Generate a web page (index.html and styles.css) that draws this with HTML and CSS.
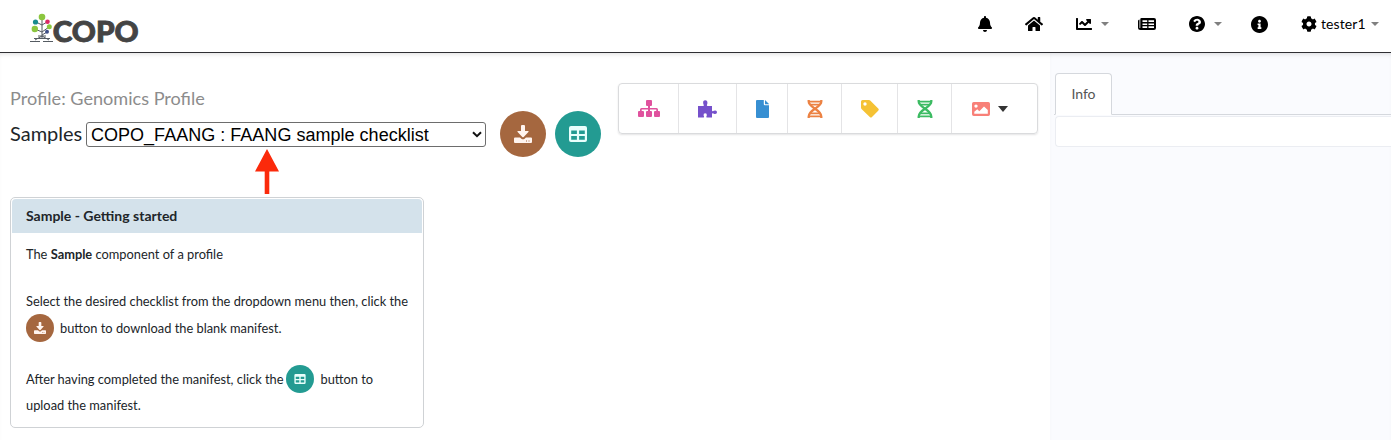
FILE: index.html
```html
<!DOCTYPE html>
<html lang="en">
<head>
<meta charset="utf-8">
<title>COPO - Samples</title>
<link rel="stylesheet" href="styles.css">
</head>
<body>
<svg class="defs" width="0" height="0">
  <symbol id="download" viewBox="0 0 18 18"><path d="M7 1q0-1 1-1h2q1 0 1 1v5h3q1.200 0 .4.900L9.700 12q-.7.700-1.400 0L3.600 6.900Q2.800 6 4 6h3zM1 12.500h5l1.700 1.400q1.300.900 2.600 0l1.700-1.400h5q1 0 1 1V17q0 1-1 1H1q-1 0-1-1v-3.500q0-1 1-1zm11 3v1h1v-1zm2.500 0v1h1v-1z"/></symbol>
  <symbol id="table" viewBox="0 0 18 16"><path fill-rule="evenodd" d="M2 0h14q2 0 2 2v12q0 2-2 2H2q-2 0-2-2V2q0-2 2-2zm.2 4.500V8h5.700V4.500zm7.900 0V8h5.700V4.500zM2.200 10v3.700h5.700V10zm7.900 0v3.700h5.700V10z"/></symbol>
  <symbol id="dna" viewBox="0 0 16 18"><g fill="none" stroke="currentColor" stroke-width="2.300"><path d="M1.700 0v1.500C1.700 8 14.300 9 14.300 16.500V18M14.300 0v1.500C14.300 8 1.700 9 1.700 16.500V18"/><path stroke-width="1.800" d="M1 1.700h14M3 4.700h10M3 13.300h10M1 16.300h14"/></g></symbol>
</svg>
<header class="topbar">
  <svg class="logo" width="112" height="39" viewBox="0 0 112 39">
    <g fill="none" stroke="#555b62" stroke-width="1"><path d="M12 6v20M6 10l6 3 5-3M5 17l7 3 7-5M12 23l5-3M8 24h8M4 26.500h16M0 29.500h10M13 29.500h10M12 24l-7 4M12 24l7 4"/></g>
    <circle cx="12" cy="5" r="3.300" fill="#8cc63f"/><circle cx="5.500" cy="10" r="2.600" fill="#178a8d"/><circle cx="17.500" cy="9.700" r="2.300" fill="#dc2866"/><circle cx="4.800" cy="17" r="3.200" fill="#8cc63f"/><circle cx="19.300" cy="14.700" r="2.500" fill="#8cc63f"/><circle cx="17" cy="19.800" r="2" fill="#3f4f87"/>
    <text class="wordmark" x="22.700" y="30.300" textLength="86" lengthAdjust="spacingAndGlyphs">COPO</text>
  </svg>
  <nav class="nav">
    <svg class="bell" width="14" height="16" viewBox="0 0 448 512"><path d="M224 512c35.320 0 63.970-28.650 63.970-64H160.030c0 35.350 28.650 64 63.970 64zm215.390-149.710c-19.320-20.760-55.470-51.990-55.470-154.290 0-77.700-54.480-139.900-127.940-155.160V32c0-17.670-14.320-32-31.980-32s-31.980 14.330-31.980 32v20.840C118.560 68.100 64.080 130.300 64.080 208c0 102.300-36.150 133.530-55.470 154.290-6 6.450-8.660 14.160-8.610 21.710.11 16.400 12.980 32 32.100 32h383.800c19.120 0 32-15.600 32.100-32 .05-7.550-2.610-15.270-8.610-21.710z"/></svg>
    <svg class="home" width="18" height="16" viewBox="0 0 576 512"><path d="M280.370 148.260L96 300.110V464a16 16 0 0 0 16 16l112.060-.29a16 16 0 0 0 15.920-16V368a16 16 0 0 1 16-16h64a16 16 0 0 1 16 16v95.640a16 16 0 0 0 16 16.050L464 480a16 16 0 0 0 16-16V300L295.670 148.260a12.190 12.190 0 0 0-15.300 0zM571.600 251.470L488 182.560V44.050a12 12 0 0 0-12-12h-56a12 12 0 0 0-12 12v72.610L318.470 43a48 48 0 0 0-61 0L4.340 251.470a12 12 0 0 0-1.600 16.900l25.500 31A12 12 0 0 0 45.150 301l235.220-193.740a12.190 12.190 0 0 1 15.300 0L530.900 301a12 12 0 0 0 16.900-1.600l25.500-31a12 12 0 0 0-1.700-16.930z"/></svg>
    <svg class="chart" width="16" height="16" viewBox="0 0 512 512"><path d="M496 384H64V80c0-8.840-7.160-16-16-16H16C7.160 64 0 71.160 0 80v336c0 17.670 14.330 32 32 32h464c8.840 0 16-7.160 16-16v-32c0-8.840-7.160-16-16-16zM464 96H345.940c-21.380 0-32.090 25.850-16.970 40.970l32.400 32.400L288 242.750l-73.370-73.370c-12.500-12.500-32.760-12.500-45.250 0l-68.690 68.690c-6.250 6.250-6.250 16.380 0 22.630l22.620 22.620c6.250 6.250 16.380 6.250 22.630 0L192 237.250l73.370 73.370c12.500 12.500 32.760 12.500 45.250 0l96-96 32.400 32.400c15.120 15.120 40.970 4.410 40.970-16.970V112c.01-8.840-7.150-16-15.990-16z"/></svg>
    <i class="caret"></i>
    <svg class="news" width="18" height="14" viewBox="0 0 18 14"><path fill-rule="evenodd" d="M3.500 1H16q2 0 2 2v8q0 2-2 2H2.500Q0 13 0 10.500V4q0-1.500 1.500-1.500V11h.8V2.200Q2.300 1 3.500 1zM4.500 3.200v1.800h4.700V3.200zm6 0v1.800H16V3.200zm-6 3.200v1.500h4.700V6.400zm6 0v1.500H16V6.400zm-6 2.900V11h4.700V9.300zm6 0V11H16V9.300z"/></svg>
    <svg class="help" width="16" height="16" viewBox="8 8 496 496"><path d="M504 256c0 136.997-111.043 248-248 248S8 392.997 8 256C8 119.083 119.043 8 256 8s248 111.083 248 248zM262.655 90c-54.497 0-89.255 22.957-116.549 63.758-3.536 5.286-2.353 12.415 2.715 16.258l34.699 26.310c5.205 3.947 12.621 3.008 16.665-2.122 17.864-22.658 30.113-35.797 57.303-35.797 20.429 0 45.698 13.148 45.698 32.958 0 14.976-12.363 22.667-32.534 33.976C247.128 238.528 216 254.941 216 296v4c0 6.627 5.373 12 12 12h56c6.627 0 12-5.373 12-12v-1.333c0-28.462 83.186-29.647 83.186-106.667 0-58.002-60.165-102-116.531-102zM256 338c-25.365 0-46 20.635-46 46 0 25.364 20.635 46 46 46s46-20.636 46-46c0-25.365-20.635-46-46-46z"/></svg>
    <i class="caret"></i>
    <svg class="info" width="17" height="17" viewBox="8 8 496 496"><path d="M256 8C119.043 8 8 119.083 8 256c0 136.997 111.043 248 248 248s248-111.003 248-248C504 119.083 392.957 8 256 8zm0 110c23.196 0 42 18.804 42 42s-18.804 42-42 42-42-18.804-42-42 18.804-42 42-42zm56 254c0 6.627-5.373 12-12 12h-88c-6.627 0-12-5.373-12-12v-24c0-6.627 5.373-12 12-12h12v-64h-12c-6.627 0-12-5.373-12-12v-24c0-6.627 5.373-12 12-12h64c6.627 0 12 5.373 12 12v100h12c6.627 0 12 5.373 12 12v24z"/></svg>
    <svg class="cog" width="16" height="16" viewBox="0 0 512 512"><path d="M487.400 315.700l-42.600-24.600c4.300-23.200 4.300-47 0-70.200l42.600-24.600c4.900-2.800 7.100-8.600 5.500-14-11.100-35.600-30-67.800-54.700-94.600-3.800-4.100-10-5.100-14.800-2.300L380.800 110c-17.900-15.400-38.500-27.300-60.800-35.100V25.800c0-5.600-3.900-10.500-9.400-11.700-36.700-8.200-74.300-7.800-109.200 0-5.500 1.200-9.400 6.100-9.400 11.700V75c-22.200 7.900-42.800 19.800-60.800 35.100L88.700 85.500c-4.900-2.800-11-1.900-14.800 2.300-24.700 26.700-43.600 58.900-54.700 94.600-1.700 5.400.6 11.200 5.500 14L67.300 221c-4.300 23.200-4.300 47 0 70.200l-42.600 24.600c-4.900 2.800-7.100 8.600-5.500 14 11.100 35.600 30 67.800 54.700 94.600 3.800 4.100 10 5.100 14.800 2.300l42.600-24.600c17.900 15.400 38.500 27.300 60.800 35.100v49.200c0 5.600 3.900 10.500 9.400 11.700 36.700 8.200 74.300 7.800 109.200 0 5.500-1.200 9.400-6.100 9.400-11.700v-49.200c22.200-7.900 42.800-19.800 60.800-35.100l42.600 24.600c4.900 2.800 11 1.900 14.800-2.300 24.700-26.700 43.600-58.900 54.700-94.600 1.500-5.500-.7-11.300-5.600-14.100zM256 336c-44.100 0-80-35.900-80-80s35.900-80 80-80 80 35.900 80 80-35.900 80-80 80z"/></svg>
    <span class="user">tester1</span>
    <i class="caret last"></i>
  </nav>
</header>
<div class="page">
  <main class="main">
    <div class="headrow">
      <div class="titles">
        <div class="profile">Profile: Genomics Profile</div>
        <div class="samples"><span class="label">Samples</span>
          <div class="select"><span class="value">COPO_FAANG : FAANG sample checklist</span><svg width="10" height="7" viewBox="0 0 10 7"><path d="M1 1.200l4 4 4-4" fill="none" stroke="#111" stroke-width="2"/></svg></div>
        </div>
      </div>
      <div class="actions">
        <button class="round brown"><svg width="18" height="18"><use href="#download"/></svg></button>
        <button class="round teal"><svg width="18" height="16"><use href="#table"/></svg></button>
      </div>
      <div class="toolbar">
        <div class="tool t1"><svg width="22" height="18" viewBox="0 0 22 18"><path d="M8 1q0-1 1-1h4q1 0 1 1v4q0 1-1 1h-1v2h6.500Q20 8 20 9.500V11h1q1 0 1 1v4q0 1-1 1h-4q-1 0-1-1v-4q0-1 1-1h1.300V9.600H12V11h1q1 0 1 1v4q0 1-1 1H9q-1 0-1-1v-4q0-1 1-1h1V9.600H3.700V11H5q1 0 1 1v4q0 1-1 1H1q-1 0-1-1v-4q0-1 1-1h1V9.500Q2 8 3.500 8H10V6H9q-1 0-1-1z"/></svg></div>
        <div class="tool t2"><svg width="19" height="18" viewBox="0 0 19 18"><path d="M0 6h5.200q.8 0 .6-.8L5.200 3.500Q4.700.2 7.200.2t2.200 3.200L8.900 5q-.2 1 .8 1H14v4.500q0 1 1 .7l.8-.4Q19 9.900 19 12.200t-3.200 1.500l-.8-.4q-1-.3-1 .6V17.500H9q-1 0-.7-.8l.5-1.200q.4-2.300-1.600-2.300t-1.600 2.200l.5 1.300q.2.800-.7.800H0z"/></svg></div>
        <div class="tool t3"><svg width="13" height="18" viewBox="0 0 13 18"><path d="M1 0h6.800v4.200q0 1 1 1H13V17q0 1-1 1H1q-1 0-1-1V1q0-1 1-1zm8 0l4 4v.3H9z"/></svg></div>
        <div class="tool t4"><svg width="16" height="18"><use href="#dna"/></svg></div>
        <div class="tool t5"><svg width="18" height="18" viewBox="0 0 18 18"><path fill-rule="evenodd" d="M0 1.600Q0 0 1.600 0H8q.7 0 1.200.5l8 8q1.100 1.100 0 2.200l-6.200 6.300q-1.100 1.100-2.200 0L.5 8.900Q0 8.400 0 7.600zM4 2.300A1.700 1.700 0 1 0 4 5.700 1.700 1.700 0 1 0 4 2.300z"/></svg></div>
        <div class="tool t6"><svg width="16" height="18"><use href="#dna"/></svg></div>
        <div class="tool t7"><svg width="18" height="14" viewBox="0 0 18 14"><path fill-rule="evenodd" d="M1.700 0h14.600Q18 0 18 1.700v10.600q0 1.700-1.700 1.700H1.700Q0 14 0 12.300V1.700Q0 0 1.700 0zM4 2.400A1.700 1.700 0 1 0 4 5.800 1.700 1.700 0 1 0 4 2.400zM2.300 11.700h13.500V8L12 4.500 7.300 9.200 5.300 7.300l-3 2.500z"/></svg><i class="caret dark"></i></div>
      </div>
    </div>
    <svg class="pointer" width="24" height="45" viewBox="0 0 24 45"><path fill="#fb2a0b" d="M12 0l12 22.500h-9.700V45H9.700V22.500H0z"/></svg>
    <section class="card">
      <h1 class="card-title">Sample - Getting started</h1>
      <div class="card-body">
        <p class="p1">The <b>Sample</b> component of a profile</p>
        <p class="p2">Select the desired checklist from the dropdown menu then, click the</p>
        <p class="p3"><span class="mini brown"><svg width="12" height="12"><use href="#download"/></svg></span><span>button to download the blank manifest.</span></p>
        <p class="p4"><span>After having completed the manifest, click the</span><span class="mini teal"><svg width="12" height="10"><use href="#table"/></svg></span><span>button to</span></p>
        <p class="p5">upload the manifest.</p>
      </div>
    </section>
  </main>
  <aside class="side">
    <div class="tabs"><div class="tab">Info</div></div>
    <div class="tabpane"></div>
  </aside>
</div>
</body>
</html>
```
FILE: styles.css
```css
* { box-sizing: border-box; }
body { margin: 0; width: 1391px; height: 440px; overflow: hidden; background: #fff; color: #212529; font-family: Lato, sans-serif; display: flex; flex-direction: column; }
svg { display: block; flex: none; fill: currentColor; }
.defs { position: absolute; }
.topbar { height: 53px; flex: none; display: flex; justify-content: space-between; border-bottom: 1px solid #2f2f33; padding: 12px 12px 0 30px; color: #000; }
.wordmark { font: 900 29px Lato, sans-serif; fill: #444; stroke: #444; stroke-width: .9; }
.nav { display: flex; align-items: center; height: 24px; }
.caret { width: 0; height: 0; flex: none; border: 4px solid transparent; border-top-color: #808080; border-bottom: 0; margin: 0 29px 0 9px; }
.home { margin: 0 33px; }
.help { margin-left: 33px; }
.cog { margin: 0 4px 0 33px; }
.user { font-size: 14px; line-height: 17px; padding-bottom: 2px; width: 45px; white-space: nowrap; letter-spacing: .1px; }
.caret.last { margin: 0 0 0 5px; }
.page { flex: 1; display: flex; box-shadow: inset 0 4px 5px -3px #0002; }
.main { width: 1050px; padding: 30px 0 0 10px; }
.headrow { display: flex; height: 75px; }
.titles { width: 476px; padding-top: 3px; }
.profile { font-size: 18.1px; line-height: 24px; color: #8c8c8c; }
.samples { display: flex; align-items: center; margin-top: 12px; height: 25px; }
.label { font-size: 20px; line-height: 24px; padding-bottom: 3px; width: 76px; white-space: nowrap; }
.select { width: 400px; height: 25px; border: 1px solid #6d6d6d; border-radius: 3px; display: flex; align-items: center; justify-content: space-between; padding: 0 3px 0 4px; color: #000; }
.value { font: 18px "Liberation Sans", Arial, sans-serif; letter-spacing: .02px; white-space: nowrap; padding-top: 1px; }
.actions { display: flex; gap: 9px; padding: 28px 0 0 14px; width: 132px; }
.round { width: 46px; height: 46px; border: 0; border-radius: 50%; padding: 0; display: grid; place-items: center; flex: none; }
.brown { background: #a5673f; color: #fff4ef; }
.teal { background: #239b92; color: #e8fffc; }
.toolbar { display: flex; height: 51px; width: 420px; border: 1px solid #dadbdd; border-radius: 4px; box-shadow: 0 1px 2px #2224261f; }
.tool { display: flex; align-items: center; justify-content: center; border-right: 1px solid #e4e4e6; }
.t1 { width: 60px; color: #e0529e; }
.t2 { width: 58px; color: #7550cb; }
.t3 { width: 51px; color: #378fd2; }
.t4 { width: 54px; color: #ec8243; }
.t5 { width: 56px; color: #f5c234; }
.t6 { width: 54px; color: #3cbb62; }
.t7 { flex: 1; color: #f88078; border: 0; gap: 8px; padding-right: 10px; }
.caret.dark { margin: 0; border-width: 6px 5px 0; border-top-color: #333; }
.pointer { margin: -9px 0 4px 245px; }
.card { width: 414px; height: 231px; border: 1px solid #cfd2d5; border-radius: 5px; padding: 1px; margin-top: -1px; }
.card-title { margin: 0; height: 34px; padding-left: 14px; background: #d4e2eb; border-radius: 4px 4px 0 0; font-size: 14px; line-height: 33px; font-weight: 700; white-space: nowrap; }
.card-body { padding: 11px 0 0 14px; font-size: 12.83px; }
.card-body p { margin: 0; display: flex; align-items: center; white-space: pre; height: 20px; }
.card-body .p2 { margin-top: 27px; }
.card-body .p3 { height: 28px; margin-top: 3px; gap: 6px; }
.card-body .p4 { height: 29px; margin-top: 23px; }
.card-body .p4 > span:not(.mini), .card-body .p5 { padding-bottom: 2px; }
.card-body .p5 { margin-top: 2px; }
.mini { width: 28px; height: 28px; border-radius: 50%; display: grid; place-items: center; flex: none; }
.p4 .mini { margin: 0 6px 2px 3px; }
.side { flex: 1; background: #fafbfe; padding: 20px 0 0 4px; box-shadow: inset 0 4px 5px -3px #0002; }
.tabs { height: 42px; padding-left: 1px; border-bottom: 1px solid #d5d8dd; }
.tab { width: 57px; height: 42px; border: 1px solid #d5d8dd; border-bottom-color: #fff; border-radius: 4px 4px 0 0; background: #fff; display: grid; place-items: center; padding-bottom: 2px; font-size: 14px; color: #555; }
.tabpane { height: 31px; margin-top: 1px; background: #fff; border: 1px solid #ebedf2; border-right: 0; border-radius: 4px 0 0 4px; margin-left: 1px; }
```
